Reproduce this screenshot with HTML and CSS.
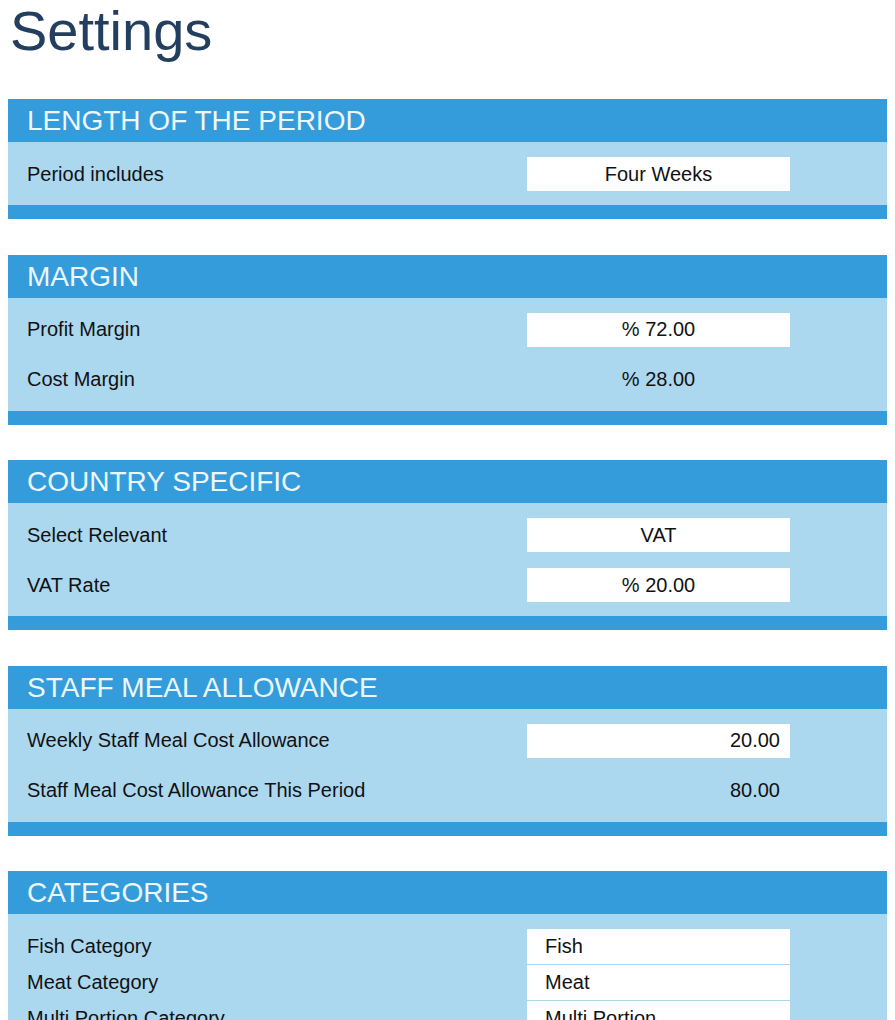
FILE: index.html
```html
<!DOCTYPE html>
<html lang="en">
<head>
<meta charset="utf-8">
<title>Settings</title>
<link rel="stylesheet" href="styles.css">
</head>
<body>
<h1 class="page-title">Settings</h1>

<section class="panel">
  <h2 class="panel-head">LENGTH OF THE PERIOD</h2>
  <div class="panel-body">
    <div class="row"><span class="label">Period includes</span><span class="field center">Four Weeks</span></div>
  </div>
  <div class="panel-foot"></div>
</section>

<section class="panel">
  <h2 class="panel-head">MARGIN</h2>
  <div class="panel-body">
    <div class="row"><span class="label">Profit Margin</span><span class="field center">% 72.00</span></div>
    <div class="row"><span class="label">Cost Margin</span><span class="value center">% 28.00</span></div>
  </div>
  <div class="panel-foot"></div>
</section>

<section class="panel">
  <h2 class="panel-head">COUNTRY SPECIFIC</h2>
  <div class="panel-body">
    <div class="row"><span class="label">Select Relevant</span><span class="field center">VAT</span></div>
    <div class="row"><span class="label">VAT Rate</span><span class="field center">% 20.00</span></div>
  </div>
  <div class="panel-foot"></div>
</section>

<section class="panel">
  <h2 class="panel-head">STAFF MEAL ALLOWANCE</h2>
  <div class="panel-body">
    <div class="row"><span class="label">Weekly Staff Meal Cost Allowance</span><span class="field right">20.00</span></div>
    <div class="row"><span class="label">Staff Meal Cost Allowance This Period</span><span class="value right">80.00</span></div>
  </div>
  <div class="panel-foot"></div>
</section>

<section class="panel">
  <h2 class="panel-head">CATEGORIES</h2>
  <div class="panel-body list">
    <div class="row tight"><span class="label">Fish Category</span><span class="field left">Fish</span></div>
    <div class="row tight"><span class="label">Meat Category</span><span class="field left">Meat</span></div>
    <div class="row tight"><span class="label">Multi Portion Category</span><span class="field left">Multi Portion</span></div>
  </div>
  <div class="panel-foot"></div>
</section>
</body>
</html>
```

FILE: styles.css
```css
html, body {
  margin: 0;
  padding: 0;
  background: #ffffff;
}

body {
  font-family: "Liberation Sans", Arial, sans-serif;
  color: #111111;
  padding: 0 8px 0 8px;
  width: 879px;
}

.page-title {
  margin: 0;
  padding: 0 0 0 2px;
  height: 99px;
  font-size: 56px;
  font-weight: normal;
  line-height: 62px;
  color: #233f5f;
}

.panel {
  margin: 0 0 35.5px 0;
}

.panel-head {
  margin: 0;
  height: 43px;
  background: #349cdb;
  color: #eef7fc;
  font-size: 28px;
  font-weight: normal;
  line-height: 44px;
  padding: 0 0 0 19px;
}

.panel-body {
  background: #acd8ef;
  padding: 15px 0 14px 0;
  display: flex;
  flex-direction: column;
  gap: 16px;
}

.panel-body.list {
  gap: 1px;
}

.panel-foot {
  height: 14px;
  background: #349cdb;
}

.row {
  display: flex;
  align-items: center;
  height: 34px;
  padding-left: 19px;
}

.row.tight {
  height: 35px;
}

.label {
  width: 500px;
  font-size: 20px;
}

.field,
.value {
  width: 263px;
  height: 100%;
  display: flex;
  align-items: center;
  box-sizing: border-box;
  font-size: 20px;
}

.field {
  background: #ffffff;
}

.center {
  justify-content: center;
}

.right {
  justify-content: flex-end;
  padding-right: 10px;
}

.left {
  justify-content: flex-start;
  padding-left: 18px;
}
```
